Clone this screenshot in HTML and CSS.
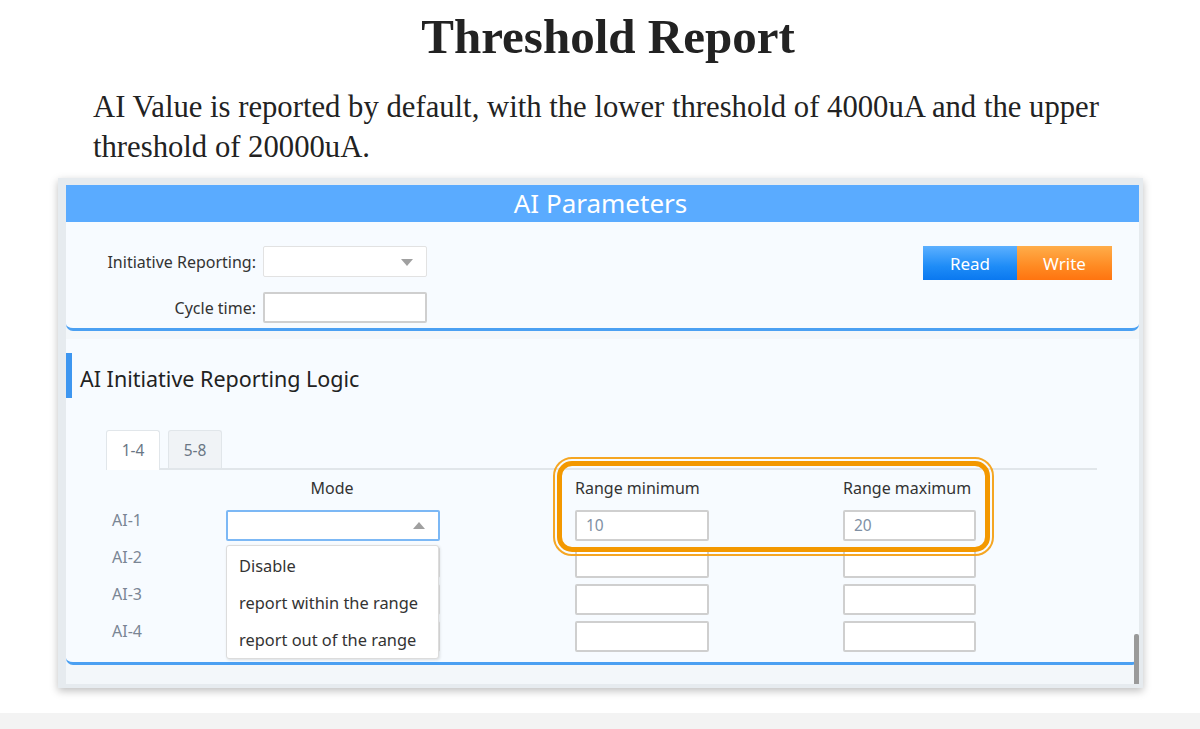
FILE: index.html
```html
<!DOCTYPE html>
<html lang="en">
<head>
    <meta charset="UTF-8">
    <meta name="viewport" content="width=device-width, initial-scale=1.0">
    <title>Threshold Report</title>
    <link rel="stylesheet" href="styles.css">
</head>
<body>
    <div class="doc">
        <h1>Threshold Report</h1>
        <p class="intro">AI Value is reported by default, with the lower threshold of 4000uA and the upper threshold of 20000uA.</p>
    </div>

    <div class="frame">
        <div class="window">
            <div class="titlebar">AI Parameters</div>

            <div class="card card-top">
                <div class="form">
                    <div class="form-row">
                        <label>Initiative Reporting:</label>
                        <div class="field select">
                            <span class="caret-down"></span>
                        </div>
                    </div>
                    <div class="form-row">
                        <label>Cycle time:</label>
                        <div class="field"></div>
                    </div>
                </div>
                <div class="actions">
                    <button class="btn btn-read">Read</button>
                    <button class="btn btn-write">Write</button>
                </div>
            </div>

            <div class="card card-logic">
                <h2 class="section-title">AI Initiative Reporting Logic</h2>

                <div class="tabs">
                    <div class="tab active">1-4</div>
                    <div class="tab">5-8</div>
                </div>

                <div class="grid">
                    <div class="head col-mode">Mode</div>
                    <div class="head col-min">Range minimum</div>
                    <div class="head col-max">Range maximum</div>

                    <div class="ai">AI-1</div>
                    <div class="field select focus col-mode"><span class="caret-up"></span></div>
                    <div class="field col-min">10</div>
                    <div class="field col-max">20</div>

                    <div class="ai">AI-2</div>
                    <div class="field select col-mode"></div>
                    <div class="field col-min"></div>
                    <div class="field col-max"></div>

                    <div class="ai">AI-3</div>
                    <div class="field select col-mode"></div>
                    <div class="field col-min"></div>
                    <div class="field col-max"></div>

                    <div class="ai">AI-4</div>
                    <div class="field select col-mode"></div>
                    <div class="field col-min"></div>
                    <div class="field col-max"></div>
                </div>
            </div>

            <div class="card card-bottom"></div>

            <ul class="dropdown">
                <li>Disable</li>
                <li>report within the range</li>
                <li>report out of the range</li>
            </ul>

            <div class="highlight"></div>
            <div class="scrollbar"></div>
        </div>
    </div>

    <div class="footer-strip"></div>
</body>
</html>
```

FILE: styles.css
```css
body {
    margin: 0;
    background: #fff;
    font-family: 'Noto Sans', 'Open Sans', sans-serif;
    color: #333;
}

.doc {
    font-family: 'Liberation Serif', 'Times New Roman', serif;
    color: #222;
}
.doc h1 {
    margin: 0;
    padding: 12px 0 0 16px;
    font-size: 49px;
    line-height: 49px;
    text-align: center;
}
.intro {
    margin: 26px 0 0 93px;
    width: 1040px;
    font-size: 30.7px;
    line-height: 40px;
}

.frame {
    margin: 11px 0 0 58px;
    width: 1085px;
    height: 510px;
    box-sizing: border-box;
    padding: 7px 4px 4px 8px;
    background: #e6ebef;
    box-shadow: 0 3px 8px rgba(0, 0, 0, 0.25);
}
.window {
    position: relative;
    height: 100%;
    background: #f3f7fa;
    overflow: hidden;
}
.titlebar {
    height: 37px;
    line-height: 37px;
    background: #5aabff;
    color: #fff;
    font-size: 26px;
    text-align: center;
    padding-right: 4px;
}

.card {
    background: #f7fbff;
    border-bottom: 3px solid #4ba0f2;
    border-radius: 0 0 7px 7px;
}
.card-top {
    display: flex;
    justify-content: space-between;
    padding: 24px 27px 0 0;
    box-sizing: border-box;
    height: 109px;
}
.form {
    display: flex;
    flex-direction: column;
    gap: 15px;
}
.form-row {
    display: flex;
    align-items: center;
    gap: 7px;
}
.form-row label {
    width: 190px;
    text-align: right;
    font-size: 16px;
    color: #333;
}
.form-row .field {
    width: 164px;
}

.field {
    position: relative;
    height: 31px;
    box-sizing: border-box;
    background: #fff;
    border: 2px solid #cfcfcf;
    border-radius: 2px;
    font-size: 15.5px;
    color: #8090a4;
    padding-left: 9px;
    line-height: 27px;
}
.field.select {
    border: 1px solid #e2e2e2;
}
.field.focus {
    border: 2px solid #7cb8f5;
}
.caret-down,
.caret-up {
    position: absolute;
    right: 13px;
    top: 12px;
    width: 0;
    height: 0;
    border-left: 6px solid transparent;
    border-right: 6px solid transparent;
}
.caret-down {
    border-top: 7px solid #a0a0a0;
}
.caret-up {
    top: 10px;
    border-bottom: 7px solid #a0a0a0;
}

.actions {
    display: flex;
}
.btn {
    width: 94px;
    height: 34px;
    border: none;
    color: #fff;
    font-family: inherit;
    font-size: 17px;
    padding: 0;
}
.btn-read {
    background: linear-gradient(to bottom, #5cb0ff 0%, #1e8cf7 60%, #0a78f0 100%);
}
.btn-write {
    width: 95px;
    background: linear-gradient(to bottom, #ffad4a 0%, #ff8a22 60%, #ff7410 100%);
}

.card-logic {
    margin-top: 8px;
    height: 326px;
    box-sizing: border-box;
    padding-top: 14px;
}
.section-title {
    margin: 0;
    height: 45px;
    line-height: 52px;
    border-left: 6px solid #3d96f0;
    padding-left: 8px;
    font-size: 21.5px;
    font-weight: normal;
    color: #222;
}

.tabs {
    display: flex;
    gap: 8px;
    margin: 32px 42px 0 40px;
    border-bottom: 2px solid #e1e6ea;
    height: 38px;
}
.tab {
    width: 54px;
    height: 38px;
    box-sizing: border-box;
    border: 1px solid #e1e6ea;
    border-bottom: none;
    border-radius: 3px 3px 0 0;
    background: #f0f3f6;
    text-align: center;
    line-height: 38px;
    font-size: 15.5px;
    color: #6a7684;
}
.tab.active {
    background: #fff;
    height: 40px;
}

.grid {
    display: grid;
    grid-template-columns: 114px 214px 135px 134px 134px 133px;
    grid-auto-rows: 31px;
    row-gap: 6px;
    padding: 3px 0 0 46px;
}
.grid .ai {
    grid-column: 1;
    font-size: 16px;
    color: #7a8594;
    line-height: 20px;
}
.grid .col-mode { grid-column: 2; }
.grid .col-min { grid-column: 4; }
.grid .col-max { grid-column: 6; }
.head {
    font-size: 16px;
    color: #333;
    line-height: 31px;
}
.head.col-mode {
    text-align: center;
    padding-right: 2px;
}

.card-bottom {
    margin-top: 2px;
    height: 17px;
    background: #f3f7fa;
    border-bottom: none;
    border-radius: 0 0 0 10px;
}

.dropdown {
    position: absolute;
    left: 160px;
    top: 360px;
    width: 213px;
    height: 114px;
    box-sizing: border-box;
    margin: 0;
    padding: 8px 0 0 0;
    list-style: none;
    background: #fff;
    border: 1px solid #dcdcdc;
    border-radius: 3px;
    box-shadow: 1px 1px 3px rgba(0, 0, 0, 0.12);
}
.dropdown li {
    height: 37px;
    line-height: 24px;
    padding-left: 12px;
    font-size: 16.4px;
    color: #333;
}

.highlight {
    position: absolute;
    left: 491px;
    top: 276px;
    width: 433px;
    height: 91px;
    box-sizing: border-box;
    border: 5px solid #f39800;
    border-radius: 15px;
    outline: 2px solid #f5a623;
    outline-offset: 2px;
}

.scrollbar {
    position: absolute;
    right: 0;
    bottom: 0;
    width: 5px;
    height: 50px;
    background: #9a9a9a;
    border-radius: 2px 2px 0 0;
}

.footer-strip {
    margin-top: 25px;
    height: 16px;
    background: #f3f3f3;
}
```
